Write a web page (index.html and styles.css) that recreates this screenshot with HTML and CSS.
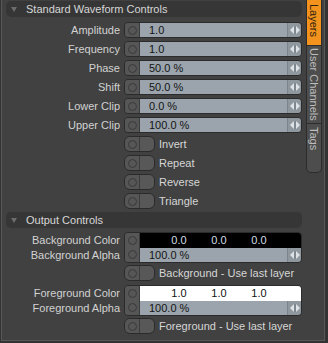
FILE: index.html
```html
<!DOCTYPE html>
<html lang="en">
<head>
  <meta charset="UTF-8">
  <title>Waveform Properties</title>
  <link rel="stylesheet" href="styles.css">
</head>
<body>

  <div class="app">

    <!-- Properties Panel -->
    <div class="panel">

      <div class="section-head"><span class="caret"></span>Standard Waveform Controls</div>
      <div class="rows first">
        <div class="row">
          <span class="label">Amplitude</span>
          <div class="field"><span class="anim"><i></i></span><span class="value">1.0</span><span class="spin"><svg width="10" height="8" viewBox="0 0 10 8"><path d="M4 0L0 4L4 8Z M6 0L10 4L6 8Z" fill="#dde2e6"/><rect x="4.5" y="0" width="1" height="8" fill="#6f777e"/></svg></span></div>
        </div>
        <div class="row">
          <span class="label">Frequency</span>
          <div class="field"><span class="anim"><i></i></span><span class="value">1.0</span><span class="spin"><svg width="10" height="8" viewBox="0 0 10 8"><path d="M4 0L0 4L4 8Z M6 0L10 4L6 8Z" fill="#dde2e6"/><rect x="4.5" y="0" width="1" height="8" fill="#6f777e"/></svg></span></div>
        </div>
        <div class="row">
          <span class="label">Phase</span>
          <div class="field"><span class="anim"><i></i></span><span class="value">50.0 %</span><span class="spin"><svg width="10" height="8" viewBox="0 0 10 8"><path d="M4 0L0 4L4 8Z M6 0L10 4L6 8Z" fill="#dde2e6"/><rect x="4.5" y="0" width="1" height="8" fill="#6f777e"/></svg></span></div>
        </div>
        <div class="row">
          <span class="label">Shift</span>
          <div class="field"><span class="anim"><i></i></span><span class="value">50.0 %</span><span class="spin"><svg width="10" height="8" viewBox="0 0 10 8"><path d="M4 0L0 4L4 8Z M6 0L10 4L6 8Z" fill="#dde2e6"/><rect x="4.5" y="0" width="1" height="8" fill="#6f777e"/></svg></span></div>
        </div>
        <div class="row">
          <span class="label">Lower Clip</span>
          <div class="field"><span class="anim"><i></i></span><span class="value">0.0 %</span><span class="spin"><svg width="10" height="8" viewBox="0 0 10 8"><path d="M4 0L0 4L4 8Z M6 0L10 4L6 8Z" fill="#dde2e6"/><rect x="4.5" y="0" width="1" height="8" fill="#6f777e"/></svg></span></div>
        </div>
        <div class="row">
          <span class="label">Upper Clip</span>
          <div class="field"><span class="anim"><i></i></span><span class="value">100.0 %</span><span class="spin"><svg width="10" height="8" viewBox="0 0 10 8"><path d="M4 0L0 4L4 8Z M6 0L10 4L6 8Z" fill="#dde2e6"/><rect x="4.5" y="0" width="1" height="8" fill="#6f777e"/></svg></span></div>
        </div>
        <div class="row">
          <span class="label"></span>
          <div class="check"><span class="toggle"><span class="anim"><i></i></span><span class="knob"></span></span>Invert</div>
        </div>
        <div class="row">
          <span class="label"></span>
          <div class="check"><span class="toggle"><span class="anim"><i></i></span><span class="knob"></span></span>Repeat</div>
        </div>
        <div class="row">
          <span class="label"></span>
          <div class="check"><span class="toggle"><span class="anim"><i></i></span><span class="knob"></span></span>Reverse</div>
        </div>
        <div class="row">
          <span class="label"></span>
          <div class="check"><span class="toggle"><span class="anim"><i></i></span><span class="knob"></span></span>Triangle</div>
        </div>
      </div>

      <div class="section-head second"><span class="caret"></span>Output Controls</div>
      <div class="rows">
        <div class="pair">
          <span class="label">Background Color</span>
          <span class="label">Background Alpha</span>
          <div class="stack">
            <span class="anim"><i></i></span>
            <span class="color dark"><span>0.0</span><span>0.0</span><span>0.0</span></span>
            <span class="anim"><i></i></span>
            <span class="alpha"><span class="value">100.0 %</span><span class="spin"><svg width="10" height="8" viewBox="0 0 10 8"><path d="M4 0L0 4L4 8Z M6 0L10 4L6 8Z" fill="#dde2e6"/><rect x="4.5" y="0" width="1" height="8" fill="#6f777e"/></svg></span></span>
          </div>
        </div>
        <div class="row">
          <span class="label"></span>
          <div class="check"><span class="toggle"><span class="anim"><i></i></span><span class="knob"></span></span>Background - Use last layer</div>
        </div>
        <div class="pair">
          <span class="label">Foreground Color</span>
          <span class="label">Foreground Alpha</span>
          <div class="stack">
            <span class="anim"><i></i></span>
            <span class="color light"><span>1.0</span><span>1.0</span><span>1.0</span></span>
            <span class="anim"><i></i></span>
            <span class="alpha"><span class="value">100.0 %</span><span class="spin"><svg width="10" height="8" viewBox="0 0 10 8"><path d="M4 0L0 4L4 8Z M6 0L10 4L6 8Z" fill="#dde2e6"/><rect x="4.5" y="0" width="1" height="8" fill="#6f777e"/></svg></span></span>
          </div>
        </div>
        <div class="row">
          <span class="label"></span>
          <div class="check"><span class="toggle"><span class="anim"><i></i></span><span class="knob"></span></span>Foreground - Use last layer</div>
        </div>
      </div>

    </div>

    <!-- Side Tabs -->
    <div class="tabs">
      <div class="tab active"><span>Layers</span></div>
      <div class="tab"><span>User Channels</span></div>
      <div class="tab last"><span>Tags</span></div>
    </div>

  </div>

</body>
</html>
```

FILE: styles.css
```css
/* General Styling */
body {
  margin: 0;
  background-color: #333333;
  font-family: "Liberation Sans", Arial, sans-serif;
  font-size: 11px;
  color: #d2d2d2;
}

.app {
  display: flex;
  width: 322px;
  height: 340px;
  margin-left: 1px;
  background-color: #414141;
  border-left: 1px solid #585858;
  border-right: 1px solid #585858;
  border-bottom: 1px solid #585858;
  overflow: hidden;
}

/* Panel */
.panel {
  width: 303px;
}

.section-head {
  position: relative;
  width: 276px;
  height: 16px;
  line-height: 16px;
  margin: 1px 0 0 4px;
  padding-left: 20px;
  background-color: #363636;
  border-radius: 5px;
  color: #d6d6d6;
}

.section-head.second {
  margin-top: 3px;
}

.caret {
  position: absolute;
  left: 5px;
  top: 6px;
  width: 0;
  height: 0;
  border-left: 3px solid transparent;
  border-right: 3px solid transparent;
  border-top: 5px solid #6c6c6c;
}

.rows {
  display: flex;
  flex-direction: column;
  gap: 3px;
  margin-top: 4px;
}

.rows.first {
  margin-top: 5px;
}

.row {
  display: grid;
  grid-template-columns: 118px 178px;
  column-gap: 4px;
  height: 16px;
  align-items: center;
}

.label {
  text-align: right;
  white-space: nowrap;
}

/* Number Fields */
.field {
  display: flex;
  height: 16px;
  box-sizing: border-box;
  border: 1px solid #2b2b2b;
  border-radius: 4px;
  overflow: hidden;
}

.anim {
  display: flex;
  align-items: center;
  justify-content: center;
  width: 14px;
  flex: none;
  background-color: #565656;
  border-right: 1px solid #3b3b3b;
}

.anim i {
  width: 9px;
  height: 9px;
  box-sizing: border-box;
  border: 1px solid #3a3a3a;
  border-radius: 50%;
}

.value {
  flex: 1;
  padding-left: 9px;
  line-height: 14px;
  background-color: #9ba4ac;
  color: #141414;
  white-space: nowrap;
}

.spin {
  display: flex;
  align-items: center;
  justify-content: center;
  width: 13px;
  background-color: #8f989f;
  border-left: 1px solid #7b848b;
}

/* Checkboxes */
.check {
  display: flex;
  align-items: center;
  gap: 4px;
  color: #d6d6d6;
  white-space: nowrap;
}

.toggle {
  display: flex;
  width: 31px;
  height: 16px;
  box-sizing: border-box;
  border: 1px solid #2b2b2b;
  border-radius: 6px;
  overflow: hidden;
}

.knob {
  flex: 1;
  background-color: #585858;
}

/* Color + Alpha pairs */
.pair {
  display: grid;
  grid-template-columns: 118px 178px;
  grid-template-rows: 15px 15px;
  column-gap: 4px;
  align-items: center;
}

.pair .stack {
  grid-column: 2;
  grid-row: 1 / 3;
  display: grid;
  grid-template-columns: 15px 1fr;
  grid-template-rows: 15px 14px;
  height: 31px;
  box-sizing: border-box;
  border: 1px solid #2b2b2b;
  border-radius: 4px;
  overflow: hidden;
}

.pair .label {
  grid-column: 1;
}

.row + .pair {
  margin-top: 1px;
}

.color {
  display: grid;
  grid-template-columns: repeat(3, 40px);
  padding-left: 19px;
  line-height: 15px;
  text-align: center;
}

.color.dark {
  background-color: #000000;
  color: #d3dee8;
}

.color.light {
  background-color: #ffffff;
  color: #111111;
}

.alpha {
  display: flex;
}

/* Side Tabs */
.tabs {
  width: 18px;
  padding-left: 2px;
}

.tab {
  display: flex;
  flex-direction: column;
  align-items: center;
  width: 16px;
  box-sizing: border-box;
  background-color: #4d4d4d;
  border: 1px solid #2c2c2c;
  border-top: none;
  color: #bdbdbd;
  overflow: hidden;
}

.tab span {
  writing-mode: vertical-rl;
  white-space: nowrap;
  line-height: 14px;
}

.tab.active {
  height: 46px;
  justify-content: flex-end;
  padding-bottom: 8px;
  background-color: #f3931d;
  color: #2d2210;
}

.tab:nth-child(2) {
  height: 78px;
  justify-content: center;
}

.tab.last {
  height: 49px;
  padding-top: 3px;
  border-radius: 0 0 5px 5px;
}
```
